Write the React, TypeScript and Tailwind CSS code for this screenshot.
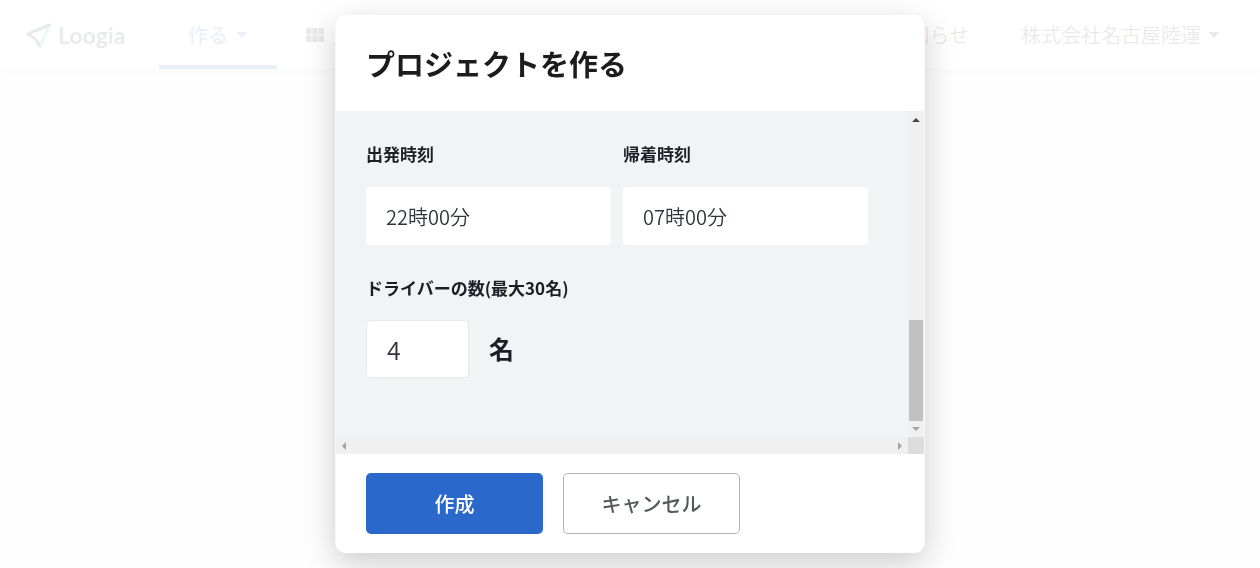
import { useState } from 'react'

const Caret = () => (
  <svg viewBox="0 0 12 6" width="12" height="6" fill="currentColor" aria-hidden="true">
    <path d="M0.5 0h11L6 6z" />
  </svg>
)

const LogoMark = () => (
  <svg viewBox="0 0 28 28" width="28" height="28" fill="none" strokeWidth="3" strokeLinecap="round" strokeLinejoin="round" aria-hidden="true">
    <path d="M24.500 3.500 15 25" stroke="#29b6f6" />
    <path d="M14 23 10.500 17 2.500 12 24.500 3" stroke="#26323a" />
  </svg>
)

const GridIcon = () => (
  <svg viewBox="0 0 18 14" width="18" height="14" fill="currentColor" aria-hidden="true">
    <path d="M0 0h5.500v6.500H0zM6.300 0h5.400v6.500H6.300zM12.500 0H18v6.500h-5.500zM0 7.500h5.500V14H0zM6.300 7.500h5.400V14H6.300zM12.500 7.500H18V14h-5.500z" />
  </svg>
)

const Header = () => (
  <header className="flex h-[69px] items-stretch bg-white pr-10 pl-[25px] text-xl text-[#222222] shadow-md">
    <a href="#" className="mr-8 flex w-[102px] items-center gap-[5px] pt-0.5">
      <LogoMark />
      <span className="font-['Lato',sans-serif] text-[23px] font-bold text-[#26323a]">Loogia</span>
    </a>
    <nav className="flex">
      <a href="#" className="flex items-center gap-2 border-b-4 border-[#2a69cb] px-[29px] pt-1 font-medium whitespace-nowrap text-[#2a69cb]">
        作る
        <Caret />
      </a>
      <a href="#" className="flex items-center gap-2 px-[29px] whitespace-nowrap">
        <GridIcon />
        見る
      </a>
    </nav>
    <div className="ml-auto flex items-center gap-[52px] font-[350] whitespace-nowrap">
      <a href="#">お知らせ</a>
      <button type="button" className="flex items-center gap-[7px]">
        株式会社名古屋陸運
        <Caret />
      </button>
    </div>
  </header>
)

type FieldProps = {
  id: string
  label: string
  value: string
  onChange: (value: string) => void
}

const TimeField = ({ id, label, value, onChange }: FieldProps) => (
  <div>
    <label htmlFor={id} className="block text-[17px] leading-6 font-bold">{label}</label>
    <input
      id={id}
      type="text"
      value={value}
      onChange={(e) => onChange(e.target.value)}
      className="mt-[21px] h-[58px] w-full rounded-sm bg-white px-5 text-xl font-[350] text-[#2f343c]"
    />
  </div>
)

const App = () => {
  const [departure, setDeparture] = useState('22時00分')
  const [arrival, setArrival] = useState('07時00分')
  const [drivers, setDrivers] = useState('4')

  return (
    <div className="min-h-screen bg-[#f2f2f2] font-['Noto_Sans_CJK_JP',sans-serif]">
      <Header />

      <div className="fixed inset-0 flex items-start justify-center bg-white/90 pt-[15px]">
        <form
          role="dialog"
          aria-labelledby="dialog-title"
          onSubmit={(e) => e.preventDefault()}
          className="w-full max-w-[590px] overflow-hidden rounded-[10px] border-x border-[#f8f8f8] bg-white text-[#1b1f23] shadow-[0_10px_32px_rgba(0,0,0,0.2)]"
        >
          <h1 id="dialog-title" className="px-[30px] py-7 text-[29px] leading-10 font-bold text-[#1c1c1c]">
            プロジェクトを作る
          </h1>

          {/* Scroll area */}
          <div className="grid grid-cols-[1fr_16px] grid-rows-[auto_17px]">
            <div className="bg-[#f1f3f5] pt-[31px] pr-10 pb-[59px] pl-[30px]">
              <div className="grid grid-cols-2 gap-3">
                <TimeField id="departure" label="出発時刻" value={departure} onChange={setDeparture} />
                <TimeField id="arrival" label="帰着時刻" value={arrival} onChange={setArrival} />
              </div>
              <label htmlFor="drivers" className="mt-[31px] block text-[17px] leading-6 font-bold">
                ドライバーの数(最大30名)
              </label>
              <div className="mt-5 flex items-center gap-5">
                <input
                  id="drivers"
                  type="text"
                  inputMode="numeric"
                  value={drivers}
                  onChange={(e) => setDrivers(e.target.value)}
                  className="h-[58px] w-[103px] rounded-sm border border-[#e6e8ea] bg-white px-5 text-[25px] font-[350] text-[#2f343c]"
                />
                <span className="text-[25px] font-bold">名</span>
              </div>
            </div>

            <div className="flex flex-col items-center justify-between bg-[#f0f0f0] pt-[7px] pb-1.5 text-[#a3a3a3]" aria-hidden="true">
              <svg viewBox="0 0 8 4" width="8" height="4" fill="#444444"><path d="M0 4h8L4 0z" /></svg>
              <div className="mt-auto mb-1.5 h-[101px] w-3.5 bg-[#c1c1c1]" />
              <svg viewBox="0 0 8 4" width="8" height="4" fill="currentColor"><path d="M0 0h8L4 4z" /></svg>
            </div>

            <div className="flex items-center justify-between bg-[#f0f0f0] px-1.5 text-[#a3a3a3]" aria-hidden="true">
              <svg viewBox="0 0 4 8" width="4" height="8" fill="currentColor"><path d="M4 0v8L0 4z" /></svg>
              <svg viewBox="0 0 4 8" width="4" height="8" fill="currentColor"><path d="M0 0v8l4-4z" /></svg>
            </div>
            <div className="bg-[#dcdcdc]" />
          </div>

          {/* Actions */}
          <div className="flex gap-5 px-[30px] py-[19px] text-xl font-medium">
            <button type="submit" className="h-[61px] w-[177px] rounded-[5px] bg-[#2a69cb] text-white">
              作成
            </button>
            <button type="button" className="h-[61px] w-[177px] rounded-[5px] border border-[#b0b2b5] bg-white text-[#55595d]">
              キャンセル
            </button>
          </div>
        </form>
      </div>
    </div>
  )
}

export default App
